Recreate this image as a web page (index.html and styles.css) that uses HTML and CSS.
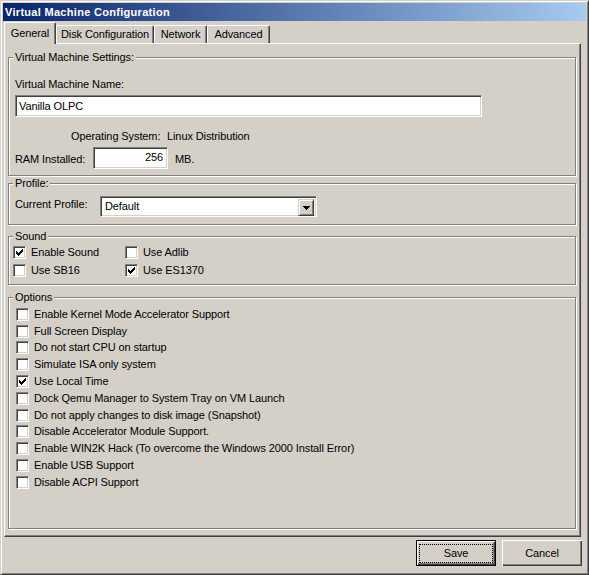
FILE: index.html
```html
<!DOCTYPE html>
<html>
<head>
<meta charset="utf-8">
<link rel="stylesheet" href="styles.css">
</head>
<body>
<div class="window">
  <div class="titlebar"><span class="title">Virtual Machine Configuration</span></div>
  <div class="tabs">
    <div class="tab selected w-general">General</div>
    <div class="tab w-disk">Disk Configuration</div>
    <div class="tab w-net">Network</div>
    <div class="tab w-adv">Advanced</div>
  </div>
  <div class="panel">
    <div class="group g-vm">
      <div class="legend">Virtual Machine Settings:</div>
      <div class="name-label">Virtual Machine Name:</div>
      <div class="field name-field">Vanilla OLPC</div>
      <div class="os-row"><span class="os-key">Operating System:</span><span>Linux Distribution</span></div>
      <div class="ram-row"><span class="ram-key">RAM Installed:</span><div class="field ram-field">256</div><span class="mb">MB.</span></div>
    </div>
    <div class="group g-profile">
      <div class="legend">Profile:</div>
      <div class="profile-row">
        <span class="profile-key">Current Profile:</span>
        <div class="field select"><span class="select-text">Default</span><span class="drop"><svg width="7" height="4" viewBox="0 0 7 4"><path d="M0 0h7v1H0zM1 1h5v1H1zM2 2h3v1H2zM3 3h1v1H3z"/></svg></span></div>
      </div>
    </div>
    <div class="group g-sound">
      <div class="legend">Sound</div>
      <div class="sound-grid">
        <div class="check"><span class="cb"><svg width="7" height="7" viewBox="0 0 7 7"><path d="M0 2h1v3H0zM1 3h1v3H1zM2 4h1v3H2zM3 3h1v3H3zM4 2h1v3H4zM5 1h1v3H5zM6 0h1v3H6z"/></svg></span><span>Enable Sound</span></div>
        <div class="check"><span class="cb"></span><span>Use Adlib</span></div>
        <div class="check"><span class="cb"></span><span>Use SB16</span></div>
        <div class="check"><span class="cb"><svg width="7" height="7" viewBox="0 0 7 7"><path d="M0 2h1v3H0zM1 3h1v3H1zM2 4h1v3H2zM3 3h1v3H3zM4 2h1v3H4zM5 1h1v3H5zM6 0h1v3H6z"/></svg></span><span>Use ES1370</span></div>
      </div>
    </div>
    <div class="group g-options">
      <div class="legend">Options</div>
      <div class="option-list">
        <div class="check opt"><span class="cb"></span><span>Enable Kernel Mode Accelerator Support</span></div>
        <div class="check opt"><span class="cb"></span><span>Full Screen Display</span></div>
        <div class="check opt"><span class="cb"></span><span>Do not start CPU on startup</span></div>
        <div class="check opt"><span class="cb"></span><span>Simulate ISA only system</span></div>
        <div class="check opt"><span class="cb"><svg width="7" height="7" viewBox="0 0 7 7"><path d="M0 2h1v3H0zM1 3h1v3H1zM2 4h1v3H2zM3 3h1v3H3zM4 2h1v3H4zM5 1h1v3H5zM6 0h1v3H6z"/></svg></span><span>Use Local Time</span></div>
        <div class="check opt"><span class="cb"></span><span>Dock Qemu Manager to System Tray on VM Launch</span></div>
        <div class="check opt"><span class="cb"></span><span>Do not apply changes to disk image (Snapshot)</span></div>
        <div class="check opt"><span class="cb"></span><span>Disable Accelerator Module Support.</span></div>
        <div class="check opt"><span class="cb"></span><span>Enable WIN2K Hack (To overcome the Windows 2000 Install Error)</span></div>
        <div class="check opt"><span class="cb"></span><span>Enable USB Support</span></div>
        <div class="check opt"><span class="cb"></span><span>Disable ACPI Support</span></div>
      </div>
    </div>
  </div>
  <div class="buttons">
    <div class="btn default"><span class="focus">Save</span></div>
    <div class="btn"><span class="btn-text">Cancel</span></div>
  </div>
</div>
</body>
</html>
```

FILE: styles.css
```css
* { box-sizing: border-box; }
html, body { margin: 0; padding: 0; background: #d4d0c8; }
body {
  font-family: "Liberation Sans", Arial, sans-serif;
  font-size: 11px;
  letter-spacing: -0.1px;
  color: #000;
}
.window {
  width: 589px;
  height: 575px;
  border: 1px solid;
  border-color: #d4d0c8 #404040 #404040 #d4d0c8;
  box-shadow: inset 1px 1px #fff, inset -1px -1px #808080;
  padding: 2px;
  background: #d4d0c8;
  display: flex;
  flex-direction: column;
}
.titlebar {
  height: 18px;
  flex: none;
  background: linear-gradient(to right, #0a246a, #a6caf0);
  display: flex;
  align-items: center;
  padding-left: 2px;
}
.title {
  color: #fff;
  font-weight: bold;
  letter-spacing: 0.3px;
  line-height: 13px;
}
.tabs {
  display: flex;
  align-items: flex-end;
  height: 21px;
  margin-top: 1px;
  padding-left: 1px;
  flex: none;
}
.tab {
  height: 18px;
  border-left: 1px solid #fff;
  border-top: 1px solid #fff;
  border-right: 1px solid #404040;
  box-shadow: inset -1px 0 #808080;
  border-radius: 2px 2px 0 0;
  display: flex;
  align-items: center;
  justify-content: center;
  background: #d4d0c8;
  line-height: 13px;
}
.tab.selected {
  height: 22px;
  margin-bottom: -1px;
  position: relative;
  z-index: 1;
}
.w-general { width: 52px; }
.w-disk { width: 98px; }
.w-net { width: 53px; }
.w-adv { width: 63px; }
.panel {
  margin-left: 1px;
  width: 577px;
  height: 494px;
  flex: none;
  border-left: 1px solid #fff;
  border-top: 1px solid #fff;
  border-right: 1px solid #404040;
  border-bottom: 1px solid #404040;
  box-shadow: inset -1px -1px #808080;
  padding: 13px 0 0 3px;
  display: flex;
  flex-direction: column;
}
.group {
  width: 568px;
  flex: none;
  border: 1px solid #808080;
  box-shadow: inset 1px 1px #fff, 1px 1px #fff;
}
.legend {
  width: fit-content;
  margin-top: -7px;
  margin-left: 4px;
  padding: 0 2px;
  line-height: 13px;
  background: #d4d0c8;
}
.g-vm { height: 119px; }
.g-profile { height: 42px; margin-top: 7px; }
.g-sound { height: 49px; margin-top: 11px; }
.g-options { height: 232px; margin-top: 12px; }

.field {
  background: #fff;
  border: 1px solid;
  border-color: #808080 #fff #fff #808080;
  box-shadow: inset 1px 1px #404040, inset -1px -1px #d4d0c8;
  line-height: 13px;
}
.name-label {
  margin-top: 14px;
  margin-left: 6px;
  line-height: 13px;
}
.name-field {
  margin-top: 4px;
  margin-left: 6px;
  width: 467px;
  height: 22px;
  padding: 4px 3px;
}
.os-row {
  margin-top: 13px;
  margin-left: 62px;
  line-height: 13px;
  display: flex;
}
.os-key { width: 96px; }
.ram-row {
  margin-top: 4px;
  margin-left: 6px;
  display: flex;
  align-items: center;
  line-height: 13px;
}
.ram-key { width: 78px; padding-top: 3px; }
.ram-field {
  width: 75px;
  height: 22px;
  text-align: right;
  padding: 3px 4px 0 3px;
}
.mb { margin-left: 7px; padding-top: 3px; }

.profile-row {
  margin-top: 6px;
  margin-left: 6px;
  display: flex;
  line-height: 13px;
}
.profile-key { width: 85px; margin-top: 2px; }
.select {
  width: 217px;
  height: 21px;
  display: flex;
  padding: 2px;
}
.select-text { flex: 1; padding: 1px 0 0 2px; }
.drop {
  width: 16px;
  height: 17px;
  background: #d4d0c8;
  border: 1px solid;
  border-color: #d4d0c8 #404040 #404040 #d4d0c8;
  box-shadow: inset 1px 1px #fff, inset -1px -1px #808080;
  display: flex;
  align-items: center;
  justify-content: center;
}
.drop svg { display: block; margin-left: 1px; }

.sound-grid {
  margin-top: 0;
  margin-left: 4px;
  display: grid;
  grid-template-columns: 112px auto;
  grid-auto-rows: 18px;
}
.check {
  display: flex;
  align-items: center;
  gap: 5px;
  line-height: 13px;
  white-space: nowrap;
}
.cb {
  width: 13px;
  height: 13px;
  flex: none;
  background: #fff;
  border: 1px solid;
  border-color: #808080 #fff #fff #808080;
  box-shadow: inset 1px 1px #404040, inset -1px -1px #d4d0c8;
  display: flex;
  align-items: center;
  justify-content: center;
}
.cb svg { display: block; }
.option-list {
  margin-top: 2px;
  margin-left: 7px;
  display: flex;
  flex-direction: column;
}
.opt { height: 16.8px; }

.buttons {
  display: flex;
  justify-content: flex-end;
  gap: 6px;
  margin-top: 3px;
  padding-right: 4px;
  flex: none;
}
.btn {
  width: 80px;
  height: 26px;
  background: #d4d0c8;
  box-shadow: inset 1px 1px #fff, inset -1px -1px #404040, inset -2px -2px #808080;
  display: flex;
  align-items: center;
  justify-content: center;
  line-height: 13px;
}
.btn.default {
  border: 1px solid #000;
  box-shadow: inset 1px 1px #fff, inset -1px -1px #404040, inset -2px -2px #808080;
  padding: 3px 2px 2px 2px;
  align-items: stretch;
}
.focus {
  flex: 1;
  border: 1px dotted #000;
  display: flex;
  align-items: center;
  justify-content: center;
}
.btn-text { padding-top: 1px; }
```
